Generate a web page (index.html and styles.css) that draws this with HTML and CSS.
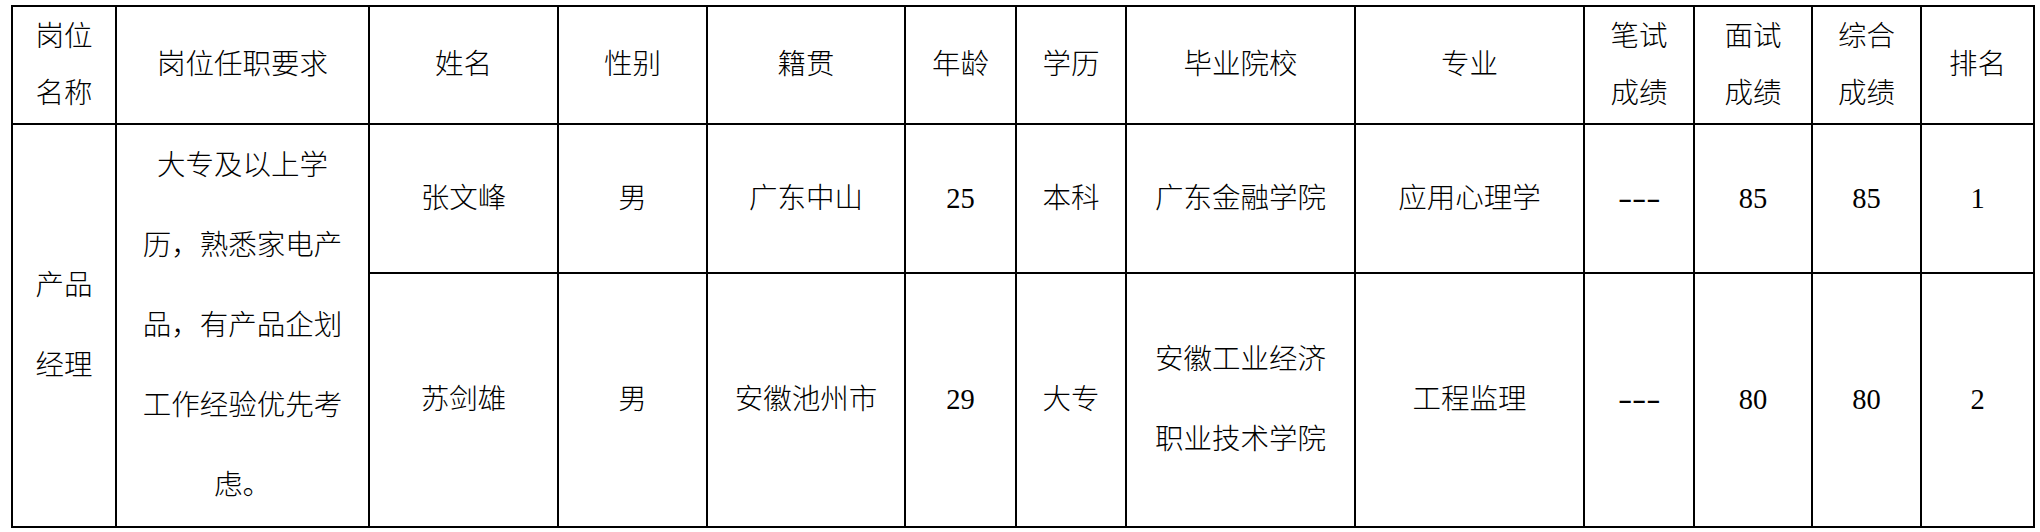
FILE: index.html
```html
<!DOCTYPE html>
<html lang="zh-CN">
<head>
<meta charset="utf-8">
<title>岗位表</title>
<link rel="stylesheet" href="styles.css">
</head>
<body>
<div class="wrap">
<table class="grid">
  <colgroup>
    <col class="c1"><col class="c2"><col class="c3"><col class="c4"><col class="c5">
    <col class="c6"><col class="c7"><col class="c8"><col class="c9"><col class="c10">
    <col class="c11"><col class="c12"><col class="c13">
  </colgroup>
  <tr class="head">
    <td class="two">岗位<br>名称</td>
    <td>岗位任职要求</td>
    <td>姓名</td>
    <td>性别</td>
    <td>籍贯</td>
    <td>年龄</td>
    <td>学历</td>
    <td>毕业院校</td>
    <td>专业</td>
    <td class="two">笔试<br>成绩</td>
    <td class="two">面试<br>成绩</td>
    <td class="two">综合<br>成绩</td>
    <td>排名</td>
  </tr>
  <tr class="r1">
    <td rowspan="2" class="body">产品<br>经理</td>
    <td rowspan="2" class="body">大专及以上学<br>历，熟悉家电产<br>品，有产品企划<br>工作经验优先考<br>虑。</td>
    <td>张文峰</td>
    <td>男</td>
    <td>广东中山</td>
    <td>25</td>
    <td>本科</td>
    <td>广东金融学院</td>
    <td>应用心理学</td>
    <td><span class="dash">---</span></td>
    <td>85</td>
    <td>85</td>
    <td>1</td>
  </tr>
  <tr class="r2">
    <td>苏剑雄</td>
    <td>男</td>
    <td>安徽池州市</td>
    <td>29</td>
    <td>大专</td>
    <td class="body">安徽工业经济<br>职业技术学院</td>
    <td>工程监理</td>
    <td><span class="dash">---</span></td>
    <td>80</td>
    <td>80</td>
    <td>2</td>
  </tr>
</table>
</div>
</body>
</html>
```

FILE: styles.css
```css
html, body {
  margin: 0;
  padding: 0;
  background: #ffffff;
}

.wrap {
  padding: 5px 0 0 11px;
}

.grid {
  border-collapse: collapse;
  table-layout: fixed;
  width: 2023px;
  font-family: "Liberation Serif", "Noto Sans CJK SC", serif;
  font-size: 28.5px;
  font-weight: 300;
  color: #000000;
}

.grid td {
  border: 2px solid #000000;
  padding: 0;
  text-align: center;
  vertical-align: middle;
  line-height: 40px;
  white-space: nowrap;
}

.c1 { width: 104px; }
.c2 { width: 253px; }
.c3 { width: 189px; }
.c4 { width: 149px; }
.c5 { width: 198px; }
.c6 { width: 111px; }
.c7 { width: 110px; }
.c8 { width: 229px; }
.c9 { width: 229px; }
.c10 { width: 110px; }
.c11 { width: 118px; }
.c12 { width: 109px; }
.c13 { width: 113px; }

.head { height: 118px; }
.r1 { height: 149px; }
.r2 { height: 254px; }

.grid td.two {
  line-height: 57px;
}

.grid td.body {
  line-height: 80px;
}

.dash {
  display: inline-block;
  font-weight: 400;
  transform: scaleX(1.5);
}
```
